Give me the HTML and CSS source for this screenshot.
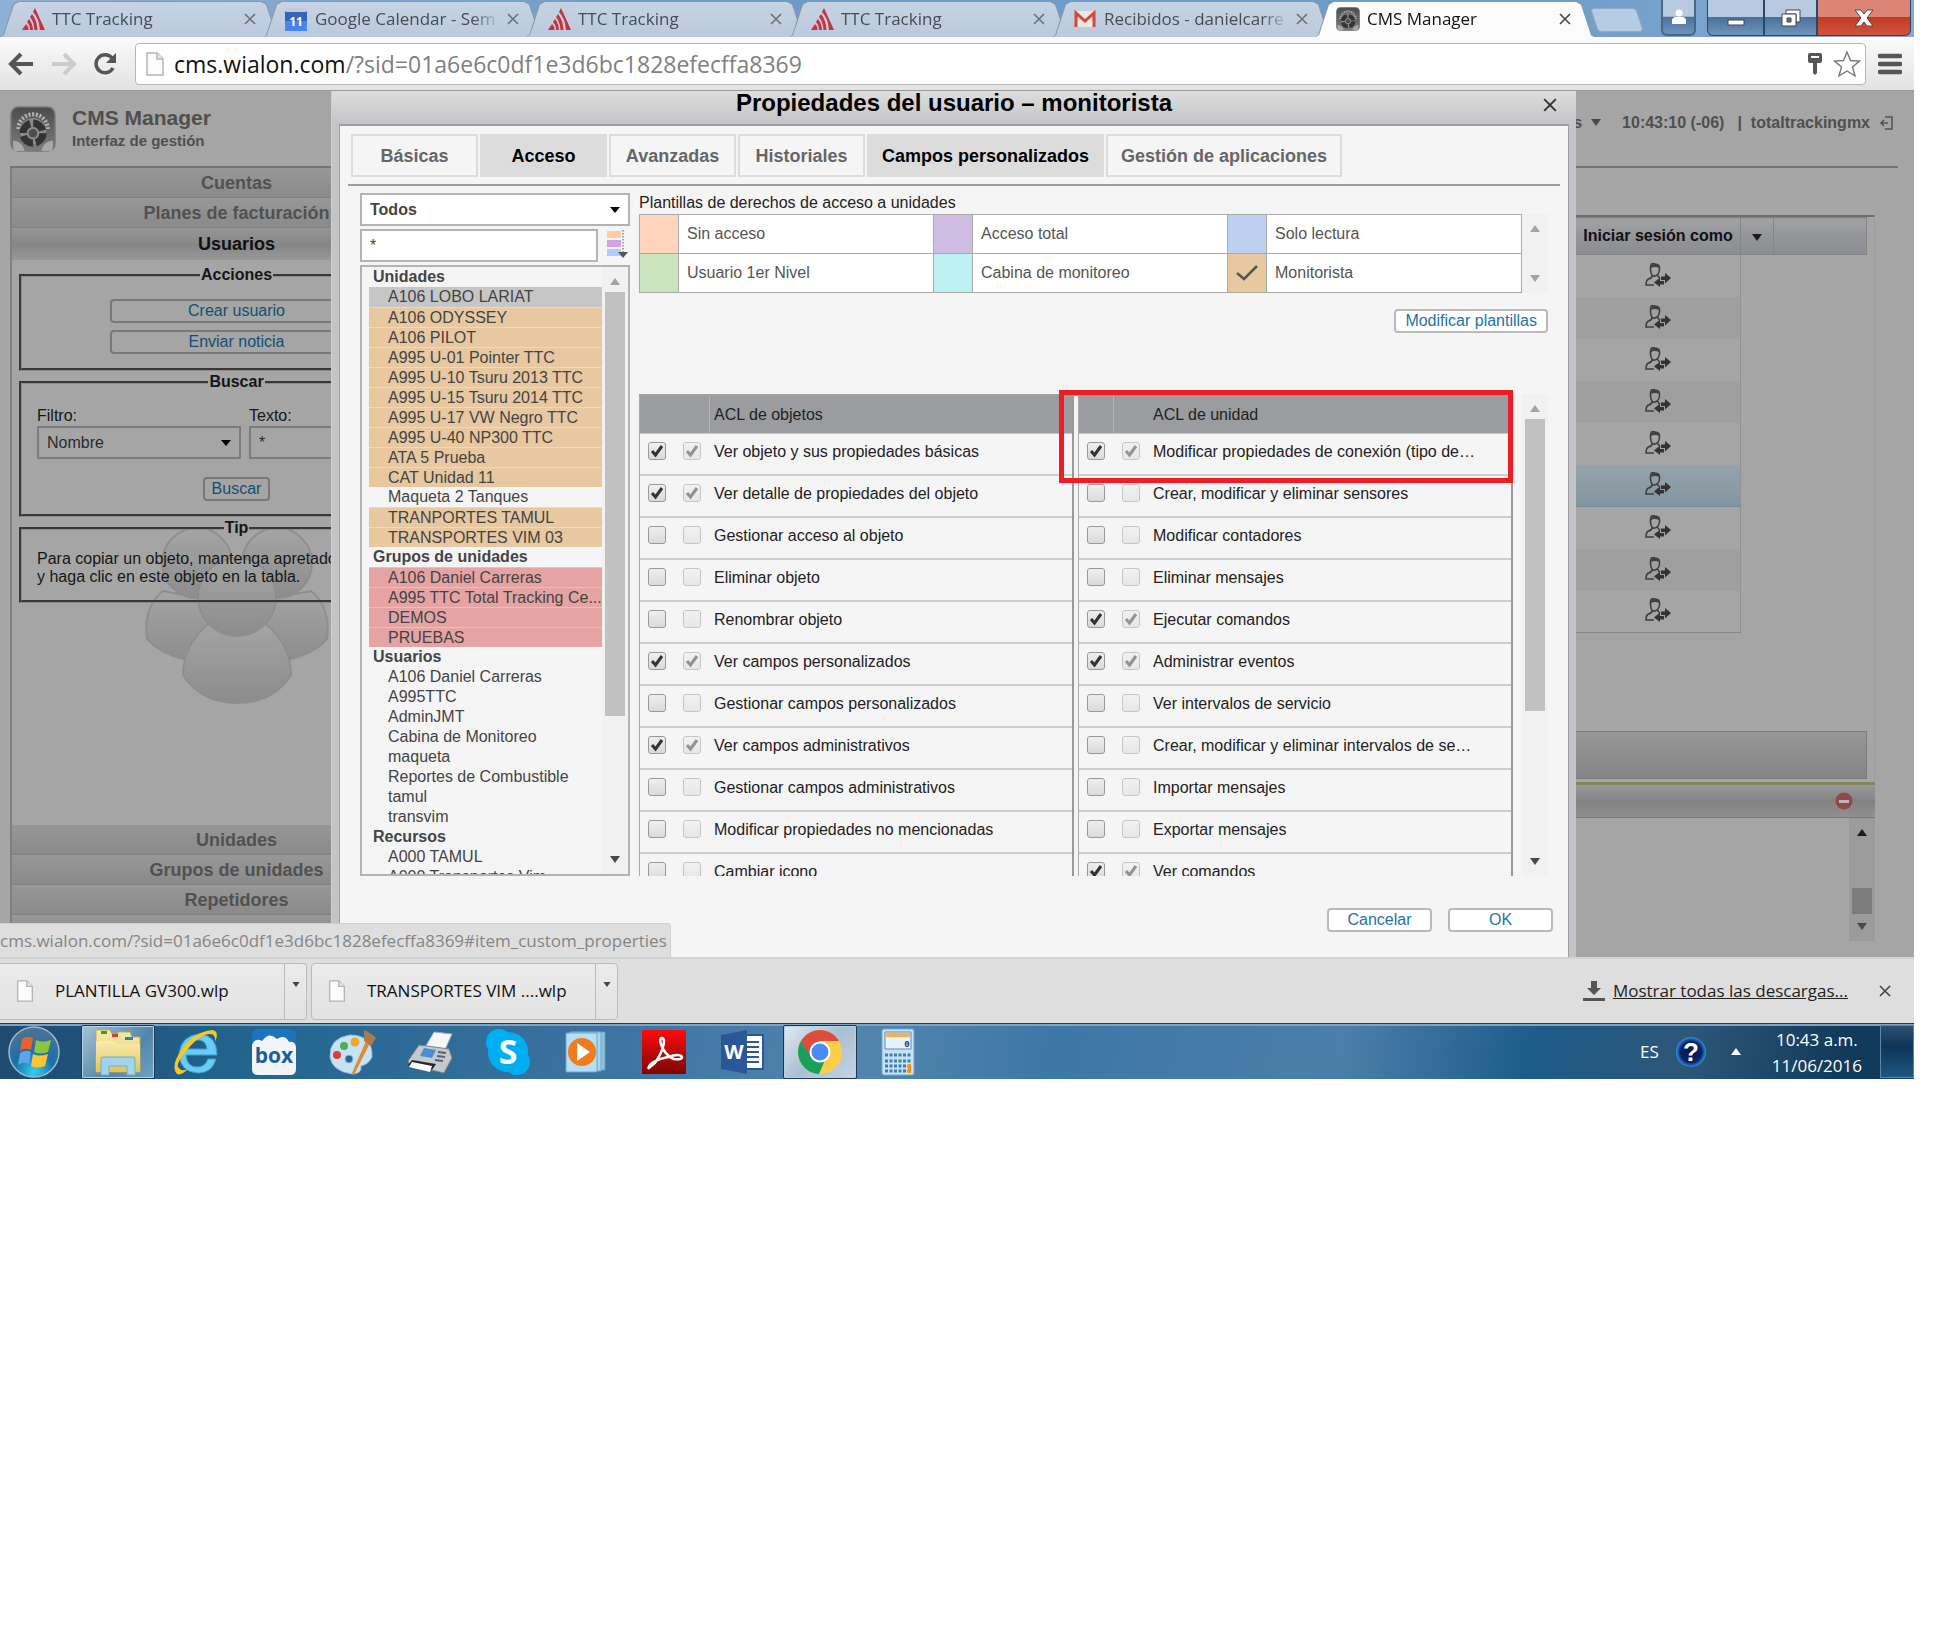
FILE: index.html
```html
<!DOCTYPE html>
<html lang="es">
<head>
<meta charset="utf-8">
<title>CMS Manager</title>
<link rel="stylesheet" href="styles.css">
</head>
<body>
<svg class="defs" aria-hidden="true">
  <defs>
    <linearGradient id="gFolder" x1="0" y1="0" x2="0" y2="1"><stop offset="0" stop-color="#f7ecb0"/><stop offset="1" stop-color="#e3c355"/></linearGradient>
    <linearGradient id="gRed" x1="0" y1="0" x2="0" y2="1"><stop offset="0" stop-color="#fb0d0d"/><stop offset="1" stop-color="#7e0505"/></linearGradient>
    <linearGradient id="gGear" x1="0" y1="0" x2="0" y2="1"><stop offset="0" stop-color="#4b4b4b"/><stop offset="1" stop-color="#7d7d7d"/></linearGradient>
    <linearGradient id="gPerson" x1="0" y1="0" x2="0" y2="1"><stop offset="0" stop-color="#a5a5a5"/><stop offset="1" stop-color="#828282"/></linearGradient>
    <radialGradient id="gOrb" cx=".5" cy=".9" r=".9"><stop offset="0" stop-color="#35d0f5"/><stop offset=".45" stop-color="#1b6fa8"/><stop offset="1" stop-color="#54728f"/></radialGradient>
    <radialGradient id="gHelp" cx=".5" cy=".5" r=".5"><stop offset="0" stop-color="#0a1450"/><stop offset=".7" stop-color="#0a2166"/><stop offset="1" stop-color="#2a93e8"/></radialGradient>
  </defs>
  <symbol id="ttc" viewBox="0 0 24 24"><path d="M14 1 24 23h-5Q18 11 12 5zM11 7q5 6 5.500 16h-3Q13 15 9 10zM8 12q3.500 4 4 11H9Q9 18 6 15zM5 17q2.500 2 2.500 6H1z" fill="#c7323e"/></symbol>
  <symbol id="close" viewBox="0 0 12 12"><path d="M1 1l10 10M11 1 1 11" fill="none" stroke="currentColor" stroke-width="1.600"/></symbol>
  <symbol id="gear" viewBox="0 0 44 44">
    <rect x="1" y="1" width="42" height="42" rx="7" fill="url(#gGear)" stroke="#777" stroke-width="1.500"/>
    <path d="M8 22a14 14 0 0 1 28 0" fill="none" stroke="#b0b0b0" stroke-width="4" stroke-dasharray="2 1.500"/>
    <circle cx="22" cy="24" r="12.500" fill="#8a8a8a"/>
    <circle cx="22" cy="26" r="9.500" fill="none" stroke="#333" stroke-width="7" stroke-dasharray="12 2.900"/>
    <circle cx="22" cy="26" r="4" fill="#4d4d4d"/>
    <path d="M3 33q9 1 11 10H6q-3 0-3-4zM41 33q-9 1-11 10h8q3 0 3-4z" fill="#a8a8a8"/>
  </symbol>
  <symbol id="file" viewBox="0 0 18 24"><path d="M1 1h10l6 6v16H1z" fill="#fbfbfb" stroke="#b5b5b5" stroke-width="1.500"/><path d="M11 1v6h6" fill="#e8e8e8" stroke="#b5b5b5" stroke-width="1.500"/></symbol>
  <symbol id="loginas" viewBox="0 0 26 24"><path d="M10 1q5 0 4.500 5.500T10 13 5.500 6.500 10 1zM7.500 12Q7 15 3.500 16 1 17 1 22h8M12.500 12q.5 2 2.500 3" fill="none" stroke="#3f3f3f" stroke-width="1.600"/><path d="M6 5q0-4 4-4t4 4q-4-2-8 0z" fill="#3f3f3f"/><path d="M26 15l-6-5v3.500h-4v3.500h4v3.500zM9 19.500l6-5V18h4v3.500h-4V24z" fill="#333"/></symbol>
  <symbol id="up" viewBox="0 0 10 7"><path d="M0 7 5 0l5 7z" fill="currentColor"/></symbol>
  <symbol id="down" viewBox="0 0 10 7"><path d="M0 0h10L5 7z" fill="currentColor"/></symbol>
</svg>

<div class="browser">
  <header class="tabstrip">
    <nav class="tabs" aria-label="Pestañas">
      <div class="tab"><svg class="favicon"><use href="#ttc"/></svg><span class="tab-title">TTC Tracking</span><button class="tab-close" aria-label="Cerrar"><svg><use href="#close"/></svg></button></div>
      <div class="tab"><svg class="favicon" viewBox="0 0 24 24"><path d="M1 4h22v20H1z" fill="#4a86ee"/><path d="M2 1h20v6H2z" fill="#c5cbd3"/><path d="M1 5h22v9H1z" fill="#3763c0"/><text x="12" y="19" class="fav-day">11</text></svg><span class="tab-title">Google Calendar - Sem</span><button class="tab-close" aria-label="Cerrar"><svg><use href="#close"/></svg></button></div>
      <div class="tab"><svg class="favicon"><use href="#ttc"/></svg><span class="tab-title">TTC Tracking</span><button class="tab-close" aria-label="Cerrar"><svg><use href="#close"/></svg></button></div>
      <div class="tab"><svg class="favicon"><use href="#ttc"/></svg><span class="tab-title">TTC Tracking</span><button class="tab-close" aria-label="Cerrar"><svg><use href="#close"/></svg></button></div>
      <div class="tab"><svg class="favicon" viewBox="0 0 24 24"><path d="M2 4h20v16H2z" fill="#eee4e4"/><path d="M3 20V6l9 8 9-8v14" fill="none" stroke="#d5473b" stroke-width="3"/></svg><span class="tab-title">Recibidos - danielcarre</span><button class="tab-close" aria-label="Cerrar"><svg><use href="#close"/></svg></button></div>
      <div class="tab tab-active"><svg class="favicon"><use href="#gear"/></svg><span class="tab-title">CMS Manager</span><button class="tab-close" aria-label="Cerrar"><svg><use href="#close"/></svg></button></div>
      <button class="tab-new" aria-label="Nueva pestaña"></button>
    </nav>
    <div class="window-buttons">
      <button class="win win-user" aria-label="Usuario"><svg width="16" height="16" viewBox="0 0 16 16"><circle cx="8" cy="4" r="3.500" fill="#fff"/><path d="M1 15V11q0-2 3-3h8q3 1 3 3v4z" fill="#fff"/></svg></button>
      <button class="win win-min" aria-label="Minimizar"><svg width="18" height="18" viewBox="0 0 18 18"><path d="M1 11h16v5H1z" fill="#fff" stroke="#445" /></svg></button>
      <button class="win win-max" aria-label="Restaurar"><svg width="20" height="18" viewBox="0 0 20 18"><path d="M5 1h14v12h-4V5H5z" fill="#fff" stroke="#445"/><path d="M1 5h14v12H1zM6 9v4h4V9z" fill="#fff" stroke="#445" fill-rule="evenodd"/></svg></button>
      <button class="win win-close" aria-label="Cerrar ventana"><svg width="20" height="18" viewBox="0 0 20 18"><path d="M1 1h6l3 4 3-4h6l-6 8 6 8h-6l-3-4-3 4H1l6-8z" fill="#fff" stroke="#544"/></svg></button>
    </div>
  </header>

  <div class="toolbar">
    <button class="tool" aria-label="Atrás"><svg width="26" height="24" viewBox="0 0 26 24"><path d="M13 2 3 12l10 10M3 12h22" fill="none" stroke="#555" stroke-width="4"/></svg></button>
    <button class="tool" aria-label="Adelante"><svg width="26" height="24" viewBox="0 0 26 24"><path d="M13 2l10 10-10 10M23 12H1" fill="none" stroke="#ccc" stroke-width="4"/></svg></button>
    <button class="tool" aria-label="Recargar"><svg width="24" height="24" viewBox="0 0 24 24"><path d="M19 16a9 9 0 1 1-1-10" fill="none" stroke="#555" stroke-width="3.500"/><path d="M22 1v10H12z" fill="#555"/></svg></button>
    <div class="omnibox">
      <svg width="18" height="24"><use href="#file"/></svg>
      <span class="url"><b>cms.wialon.com</b>/?sid=01a6e6c0df1e3d6bc1828efecffa8369</span>
      <svg width="16" height="22" viewBox="0 0 16 22"><path d="M1 2q0-2 2-2h10q2 0 2 2v6q0 2-2 2h-3v10l-2 2-2-2V10H3Q1 10 1 8z" fill="#555"/><path d="M4 3h8v2H4z" fill="#fff"/></svg>
      <svg width="28" height="28" viewBox="0 0 28 28"><path d="M14 2l3.500 8.500 9 .5-7 6 2.500 9-8-5-8 5 2.500-9-7-6 9-.5z" fill="#fff" stroke="#777" stroke-width="1.400"/></svg>
    </div>
    <button class="tool" aria-label="Menú"><svg width="24" height="22" viewBox="0 0 24 22"><path d="M2 3h20M2 11h20M2 19h20" stroke="#555" stroke-width="4.500" stroke-linecap="round"/></svg></button>
  </div>

  <main class="app">
    <div class="manager">
      <div class="mgr-head">
        <svg width="46" height="46"><use href="#gear"/></svg>
        <div class="brand"><div class="brand-name">CMS Manager</div><div class="brand-sub">Interfaz de gestión</div></div>
        <div class="session"><span>Herramientas</span><svg class="arrow"><use href="#down"/></svg><span class="clock">10:43:10 (-06)</span><span>|</span><span class="login">totaltrackingmx</span><svg width="14" height="14" viewBox="0 0 14 14"><path d="M6 1h7v12H6M9 7H2M5 4 2 7l3 3" fill="none" stroke="#555" stroke-width="1.600"/></svg></div>
      </div>
      <div class="mgr-body">
        <aside class="side">
          <button class="acc">Cuentas</button>
          <button class="acc">Planes de facturación</button>
          <button class="acc acc-open">Usuarios</button>
          <div class="side-body">
            <svg class="watermark" width="196" height="184" viewBox="0 0 196 184">
              <g fill="url(#gPerson)" stroke="#858585" stroke-width="2">
                <path d="M24 66Q4 82 8 114q18 20 60 24l20-60zM172 66q20 16 16 48-18 20-60 24l-20-60z"/>
                <circle cx="58" cy="38" r="35"/><circle cx="138" cy="38" r="35"/>
                <path d="M70 98Q44 120 44 150q18 28 54 28t54-28q0-30-26-52z"/>
                <circle cx="98" cy="72" r="39"/>
              </g>
            </svg>
            <fieldset class="box box-actions"><legend>Acciones</legend>
              <button class="btn">Crear usuario</button>
              <button class="btn">Enviar noticia</button>
            </fieldset>
            <fieldset class="box box-search"><legend>Buscar</legend>
              <div class="fields">
                <label for="filtro">Filtro:</label><label for="texto">Texto:</label>
                <select id="filtro"><option>Nombre</option></select>
                <input id="texto" type="text" value="*">
              </div>
              <button class="btn">Buscar</button>
            </fieldset>
            <fieldset class="box box-tip"><legend>Tip</legend>
              <p>Para copiar un objeto, mantenga apretado Ctrl<br>y haga clic en este objeto en la tabla.</p>
            </fieldset>
          </div>
          <button class="acc">Unidades</button>
          <button class="acc">Grupos de unidades</button>
          <button class="acc">Repetidores</button>
          <button class="acc">Pruebas de servicio</button>
        </aside>
        <section class="work">
          <div class="grid-wrap">
            <table class="users">
              <colgroup><col><col class="c-login"><col class="c-menu"><col class="c-rest"></colgroup>
              <thead><tr><th></th><th>Iniciar sesión como</th><th><svg class="arrow arrow-dark"><use href="#down"/></svg></th><th></th></tr></thead>
              <tbody>
                <tr><td></td><td><svg class="as"><use href="#loginas"/></svg></td></tr>
                <tr><td></td><td><svg class="as"><use href="#loginas"/></svg></td></tr>
                <tr><td></td><td><svg class="as"><use href="#loginas"/></svg></td></tr>
                <tr><td></td><td><svg class="as"><use href="#loginas"/></svg></td></tr>
                <tr><td></td><td><svg class="as"><use href="#loginas"/></svg></td></tr>
                <tr class="current"><td></td><td><svg class="as"><use href="#loginas"/></svg></td></tr>
                <tr><td></td><td><svg class="as"><use href="#loginas"/></svg></td></tr>
                <tr><td></td><td><svg class="as"><use href="#loginas"/></svg></td></tr>
                <tr><td></td><td><svg class="as"><use href="#loginas"/></svg></td></tr>
              </tbody>
            </table>
            <div class="grid-foot"></div>
          </div>
          <div class="log-head"><svg width="18" height="18" viewBox="0 0 18 18"><circle cx="9" cy="9" r="8.500" fill="#8e4a4a"/><path d="M4 8h10v3H4z" fill="#c0b4b4"/></svg></div>
          <div class="log"><div class="scroll scroll-dim"><svg class="arrow arrow-dark"><use href="#up"/></svg><i class="thumb"></i><svg class="arrow"><use href="#down"/></svg></div></div>
        </section>
      </div>
    </div>

    <section class="dialog" role="dialog" aria-labelledby="dlg-title">
      <header class="dlg-title"><h1 id="dlg-title">Propiedades del usuario – monitorista</h1><button class="dlg-close" aria-label="Cerrar"><svg width="14" height="14"><use href="#close"/></svg></button></header>
      <div class="dlg-panel">
        <nav class="dlg-tabs">
          <button>Básicas</button><button class="on">Acceso</button><button>Avanzadas</button><button>Historiales</button><button class="on wide">Campos personalizados</button><button class="wide">Gestión de aplicaciones</button>
        </nav>
        <div class="dlg-content">
          <div class="objects">
            <select class="bold" aria-label="Tipo"><option>Todos</option></select>
            <div class="mask"><input type="text" value="*" aria-label="Máscara">
              <button class="sort" aria-label="Ordenar"><svg width="22" height="30" viewBox="0 0 22 30"><path d="M1 1h14v7H1z" fill="#ffcba4"/><path d="M1 10h14v7H1z" fill="#cda4e6"/><path d="M1 19h14v7H1z" fill="#aecbfa"/><path d="M17 0v24" stroke="#555" stroke-dasharray="1.500 1.500"/><path d="M12 22h10l-5 6z" fill="#555"/></svg></button></div>
            <div class="list-box">
              <ul class="list">
                <li class="group">Unidades</li>
                <li class="sel">A106 LOBO LARIAT</li>
                <li class="mon">A106 ODYSSEY</li><li class="mon">A106 PILOT</li><li class="mon">A995 U-01 Pointer TTC</li><li class="mon">A995 U-10 Tsuru 2013 TTC</li><li class="mon">A995 U-15 Tsuru 2014 TTC</li><li class="mon">A995 U-17 VW Negro TTC</li><li class="mon">A995 U-40 NP300 TTC</li><li class="mon">ATA 5 Prueba</li><li class="mon">CAT Unidad 11</li>
                <li>Maqueta 2 Tanques</li>
                <li class="mon">TRANPORTES TAMUL</li><li class="mon">TRANSPORTES VIM 03</li>
                <li class="group">Grupos de unidades</li>
                <li class="red">A106 Daniel Carreras</li><li class="red">A995 TTC Total Tracking Ce...</li><li class="red">DEMOS</li><li class="red">PRUEBAS</li>
                <li class="group">Usuarios</li>
                <li>A106 Daniel Carreras</li><li>A995TTC</li><li>AdminJMT</li><li>Cabina de Monitoreo</li><li>maqueta</li><li>Reportes de Combustible</li><li>tamul</li><li>transvim</li>
                <li class="group">Recursos</li>
                <li>A000 TAMUL</li><li>A000 Transportes Vim</li>
              </ul>
              <div class="scroll"><svg class="arrow arrow-off"><use href="#up"/></svg><i class="thumb thumb-list"></i><svg class="arrow"><use href="#down"/></svg></div>
            </div>
          </div>
          <div class="rights">
            <p class="caption">Plantillas de derechos de acceso a unidades</p>
            <div class="tpl-row">
              <div class="templates">
                <label><input type="radio" name="tpl" class="t1">Sin acceso</label>
                <label><input type="radio" name="tpl" class="t2">Acceso total</label>
                <label><input type="radio" name="tpl" class="t3">Solo lectura</label>
                <label><input type="radio" name="tpl" class="t4">Usuario 1er Nivel</label>
                <label><input type="radio" name="tpl" class="t5">Cabina de monitoreo</label>
                <label><input type="radio" name="tpl" class="t6" checked>Monitorista</label>
              </div>
              <div class="scroll"><svg class="arrow arrow-off"><use href="#up"/></svg><svg class="arrow arrow-off"><use href="#down"/></svg></div>
            </div>
            <div class="tpl-actions"><button class="btn">Modificar plantillas</button></div>
            <div class="acl-row">
              <div class="acl">
                <div class="acl-view">
                  <table class="acl-table">
                    <thead><tr><th colspan="2" class="line"></th><th>ACL de objetos</th></tr></thead>
                    <tbody>
                      <tr><td><input type="checkbox" id="o1" checked></td><td><input type="checkbox" checked disabled aria-labelledby="lo1"></td><td><label id="lo1" for="o1">Ver objeto y sus propiedades básicas</label></td></tr>
                      <tr><td><input type="checkbox" id="o2" checked></td><td><input type="checkbox" checked disabled aria-labelledby="lo2"></td><td><label id="lo2" for="o2">Ver detalle de propiedades del objeto</label></td></tr>
                      <tr><td><input type="checkbox" id="o3"></td><td><input type="checkbox" disabled aria-labelledby="lo3"></td><td><label id="lo3" for="o3">Gestionar acceso al objeto</label></td></tr>
                      <tr><td><input type="checkbox" id="o4"></td><td><input type="checkbox" disabled aria-labelledby="lo4"></td><td><label id="lo4" for="o4">Eliminar objeto</label></td></tr>
                      <tr><td><input type="checkbox" id="o5"></td><td><input type="checkbox" disabled aria-labelledby="lo5"></td><td><label id="lo5" for="o5">Renombrar objeto</label></td></tr>
                      <tr><td><input type="checkbox" id="o6" checked></td><td><input type="checkbox" checked disabled aria-labelledby="lo6"></td><td><label id="lo6" for="o6">Ver campos personalizados</label></td></tr>
                      <tr><td><input type="checkbox" id="o7"></td><td><input type="checkbox" disabled aria-labelledby="lo7"></td><td><label id="lo7" for="o7">Gestionar campos personalizados</label></td></tr>
                      <tr><td><input type="checkbox" id="o8" checked></td><td><input type="checkbox" checked disabled aria-labelledby="lo8"></td><td><label id="lo8" for="o8">Ver campos administrativos</label></td></tr>
                      <tr><td><input type="checkbox" id="o9"></td><td><input type="checkbox" disabled aria-labelledby="lo9"></td><td><label id="lo9" for="o9">Gestionar campos administrativos</label></td></tr>
                      <tr><td><input type="checkbox" id="o10"></td><td><input type="checkbox" disabled aria-labelledby="lo10"></td><td><label id="lo10" for="o10">Modificar propiedades no mencionadas</label></td></tr>
                      <tr><td><input type="checkbox" id="o11"></td><td><input type="checkbox" disabled aria-labelledby="lo11"></td><td><label id="lo11" for="o11">Cambiar icono</label></td></tr>
                    </tbody>
                  </table>
                  <table class="acl-table">
                    <thead><tr><th class="line"></th><th></th><th>ACL de unidad</th></tr></thead>
                    <tbody>
                      <tr><td><input type="checkbox" id="u1" checked></td><td><input type="checkbox" checked disabled aria-labelledby="lu1"></td><td><label id="lu1" for="u1">Modificar propiedades de conexión (tipo de…</label></td></tr>
                      <tr><td><input type="checkbox" id="u2"></td><td><input type="checkbox" disabled aria-labelledby="lu2"></td><td><label id="lu2" for="u2">Crear, modificar y eliminar sensores</label></td></tr>
                      <tr><td><input type="checkbox" id="u3"></td><td><input type="checkbox" disabled aria-labelledby="lu3"></td><td><label id="lu3" for="u3">Modificar contadores</label></td></tr>
                      <tr><td><input type="checkbox" id="u4"></td><td><input type="checkbox" disabled aria-labelledby="lu4"></td><td><label id="lu4" for="u4">Eliminar mensajes</label></td></tr>
                      <tr><td><input type="checkbox" id="u5" checked></td><td><input type="checkbox" checked disabled aria-labelledby="lu5"></td><td><label id="lu5" for="u5">Ejecutar comandos</label></td></tr>
                      <tr><td><input type="checkbox" id="u6" checked></td><td><input type="checkbox" checked disabled aria-labelledby="lu6"></td><td><label id="lu6" for="u6">Administrar eventos</label></td></tr>
                      <tr><td><input type="checkbox" id="u7"></td><td><input type="checkbox" disabled aria-labelledby="lu7"></td><td><label id="lu7" for="u7">Ver intervalos de servicio</label></td></tr>
                      <tr><td><input type="checkbox" id="u8"></td><td><input type="checkbox" disabled aria-labelledby="lu8"></td><td><label id="lu8" for="u8">Crear, modificar y eliminar intervalos de se…</label></td></tr>
                      <tr><td><input type="checkbox" id="u9"></td><td><input type="checkbox" disabled aria-labelledby="lu9"></td><td><label id="lu9" for="u9">Importar mensajes</label></td></tr>
                      <tr><td><input type="checkbox" id="u10"></td><td><input type="checkbox" disabled aria-labelledby="lu10"></td><td><label id="lu10" for="u10">Exportar mensajes</label></td></tr>
                      <tr><td><input type="checkbox" id="u11" checked></td><td><input type="checkbox" checked disabled aria-labelledby="lu11"></td><td><label id="lu11" for="u11">Ver comandos</label></td></tr>
                    </tbody>
                  </table>
                </div>
                <div class="highlight"></div>
              </div>
              <div class="scroll"><svg class="arrow arrow-off"><use href="#up"/></svg><i class="thumb thumb-acl"></i><svg class="arrow"><use href="#down"/></svg></div>
            </div>
          </div>
        </div>
        <footer class="dlg-foot"><button class="btn">Cancelar</button><button class="btn">OK</button></footer>
      </div>
    </section>
    <div class="status">cms.wialon.com/?sid=01a6e6c0df1e3d6bc1828efecffa8369#item_custom_properties</div>
  </main>

  <div class="downloads">
    <div class="dl"><svg width="18" height="22"><use href="#file"/></svg><button class="dl-name">PLANTILLA GV300.wlp</button><button class="dl-menu" aria-label="Opciones"><svg><use href="#down"/></svg></button></div>
    <div class="dl"><svg width="18" height="22"><use href="#file"/></svg><button class="dl-name">TRANSPORTES VIM ....wlp</button><button class="dl-menu" aria-label="Opciones"><svg><use href="#down"/></svg></button></div>
    <div class="dl-all"><svg width="22" height="20" viewBox="0 0 22 20"><path d="M8 0h6v7h4l-7 7-7-7h4zM0 17h22v3H0z" fill="#555"/></svg><a href="#">Mostrar todas las descargas...</a></div>
    <button class="dl-close" aria-label="Cerrar"><svg width="12" height="12"><use href="#close"/></svg></button>
  </div>

  <footer class="taskbar">
    <button class="orb" aria-label="Inicio"><svg width="52" height="52" viewBox="0 0 52 52"><circle cx="26" cy="26" r="25" fill="url(#gOrb)" stroke="#9bb9d2" stroke-width="1.500"/><path d="M14 13q6-4 11-1l-2 12q-6-3-11 1z" fill="#e8632c"/><path d="M28 14q6 3 15 0l-3 12q-7 3-14 0z" fill="#8cc540"/><path d="M12 27q6-4 11-1l-2 12q-6-3-11 1z" fill="#5aa5e6"/><path d="M25 28q6 3 15 0l-3 12q-7 3-14 0z" fill="#fbc62f"/></svg></button>
    <button class="task on" aria-label="Explorador"><svg width="50" height="48" viewBox="0 0 50 48"><path d="M3 8V2h14l2 4h6V4h12l2 5h8v35H3z" fill="url(#gFolder)" stroke="#c9a94a"/><path d="M8 3h6v3H8z" fill="#3a9a3a"/><path d="M19 6h6v3h-6z" fill="#d63b2b"/><path d="M32 9h8v3h-8z" fill="#3a78c8"/><path d="M3 13h18l3 3h23v28H3z" fill="url(#gFolder)"/><path d="M8 47V31q0-2 2-2h30q2 0 2 2v16h-8v-9H16v9z" fill="#9fd3ee" stroke="#6eaed2"/></svg></button>
    <button class="task" aria-label="Internet Explorer"><svg width="48" height="48" viewBox="0 0 48 48"><path d="M36 31q-3 8-11 8-10 0-11-12h31Q45 7 27 6 9 8 7 26q1 18 19 19 14 0 18-14zM15 21q2-9 11-9 8 0 9 9z" fill="#6bcbf4" stroke="#3c9fd4" fill-rule="evenodd"/><path d="M5 46Q-2 38 10 21T40 2q8 1 3 12 1-8-5-8Q28 6 15 22T7 40q2 4 9 1-7 7-11 5z" fill="#f8c722"/></svg></button>
    <button class="task" aria-label="Box"><svg width="46" height="48" viewBox="0 0 46 48"><rect x="1" y="1" width="44" height="46" rx="6" fill="#1c75bb"/><path d="M1 17q3-8 10-4 7-10 15-2 8-5 12 3 6-1 7 5v22q0 6-6 6H7q-6 0-6-6z" fill="#f2f5f8"/><text x="23" y="35" class="box-word">box</text></svg></button>
    <button class="task" aria-label="Paint"><svg width="48" height="48" viewBox="0 0 48 48"><path d="M22 7Q1 10 2 29q2 14 22 17 10 0 9-8 8-2 11-9Q45 7 22 7zM21 27a4 4 0 1 1 0 8 4 4 0 0 1 0-8z" fill="#c5e3f5" stroke="#90b9d6" fill-rule="evenodd"/><circle cx="9" cy="27" r="4" fill="#e03c31"/><circle cx="16" cy="18" r="4" fill="#4cae4c"/><circle cx="27" cy="14" r="4.500" fill="#f4a62a"/><path d="M38 13l4 2-16 32-2-2z" fill="#e08a33"/><path d="M36 2q9 4 12 8l-5 8-7-5z" fill="#a97b4f"/></svg></button>
    <button class="task" aria-label="Fax"><svg width="48" height="48" viewBox="0 0 48 48"><path d="M28 4l18 2-8 18-20-3z" fill="#f4f6f8" stroke="#aab"/><path d="M13 17l30 4 3 9-8 15L4 37l-2-4z" fill="#c3c9cf" stroke="#7b8288"/><path d="M18 20l12 2-4 8-12-2z" fill="#4a8fd0"/><path d="M6 32l24 4-4 6L2 37z" fill="#23282d"/><path d="M6 34l20 4-2 6-21-5z" fill="#fff"/><path d="M32 24l8 1M31 28l8 1M29 32l8 1" stroke="#59616a" stroke-width="2"/></svg></button>
    <button class="task" aria-label="Skype"><svg width="46" height="48" viewBox="0 0 46 48"><circle cx="14" cy="14" r="13" fill="#00aff0"/><circle cx="32" cy="34" r="13" fill="#00aff0"/><circle cx="23" cy="24" r="20" fill="#00aff0"/><text x="23" y="36" class="skype-s">S</text></svg></button>
    <button class="task" aria-label="Reproductor"><svg width="42" height="42" viewBox="0 0 42 42"><path d="M8 1h32v38H8z" fill="#8dc3e0" stroke="#5f9bbd"/><path d="M5 1h31v39H5z" fill="#a9d6ec" stroke="#6ba6c6"/><path d="M1 2h31v39H1z" fill="#b5dff2" stroke="#6ba6c6"/><circle cx="17" cy="21" r="14" fill="#f07c1f"/><path d="M12 12l13 9-13 9z" fill="#fff"/></svg></button>
    <button class="task" aria-label="Adobe Reader"><svg width="46" height="46" viewBox="0 0 46 46"><path d="M1 1h44v44H1z" fill="url(#gRed)"/><path d="M9 38q7-4 12-17 4-11 0-12-4 1 1 11 5 8 11 10 8 1 8-2-2-4-14 0-14 3-18 8-3 5 0 2z" fill="none" stroke="#fff" stroke-width="2.500"/></svg></button>
    <button class="task" aria-label="Word"><svg width="46" height="46" viewBox="0 0 46 46"><path d="M24 6h20v34H24z" fill="#fff" stroke="#2b579a" stroke-width="2"/><path d="M26 13h14M26 18h14M26 23h14M26 28h14M26 33h14" stroke="#2b579a" stroke-width="2"/><path d="M2 6l26-5v44L2 40z" fill="#2b579a"/><text x="15" y="30" class="word-w">W</text></svg></button>
    <button class="task on chrome" aria-label="Chrome"><svg width="46" height="46" viewBox="0 0 46 46"><circle cx="23" cy="23" r="22" fill="#fccd48"/><path d="M4 12a22 22 0 0 1 38 0H23L13 29z" fill="#dc4b3e"/><path d="M4 12 14 28.500 28 31 22 45A22 22 0 0 1 4 12z" fill="#17a05e"/><circle cx="23" cy="23" r="10.500" fill="#fff"/><circle cx="23" cy="23" r="8.500" fill="#4c8bf5"/></svg></button>
    <button class="task" aria-label="Calculadora"><svg width="34" height="48" viewBox="0 0 34 48"><rect x="1" y="1" width="32" height="46" rx="2" fill="#c7e2f3" stroke="#7aa5c4"/><path d="M4 4h26v17H4z" fill="#e6f2fa" stroke="#5b8db3"/><path d="M5 5h24v4H5z" fill="#f6b34c"/><text x="26" y="19" class="calc-0">0</text><path d="M4 27h26M4 33h26M4 38h26M4 43h26" stroke="#3f7fae" stroke-width="3" stroke-dasharray="3 1.500"/><path d="M27 36h3v9h-3z" fill="#f0951e"/></svg></button>
    <div class="tray">
      <span>ES</span>
      <svg width="32" height="34" viewBox="0 0 32 34"><circle cx="16" cy="17" r="15" fill="url(#gHelp)"/><text x="16" y="26" class="help-q">?</text></svg>
      <svg class="tray-up"><use href="#up"/></svg>
      <div class="tray-clock"><div>10:43 a.m.</div><div>11/06/2016</div></div>
      <button class="show-desktop" aria-label="Mostrar escritorio"></button>
    </div>
  </footer>
</div>
</body>
</html>
```
FILE: styles.css
```css
* { box-sizing: border-box; }
body { margin: 0; background: #fff; color: #222; font: 16px/20px "Liberation Sans", Arial, sans-serif; }
button, input, select { font: inherit; color: inherit; margin: 0; padding: 0; }
button { border: 0; background: none; }
svg { flex: none; }
.defs { position: absolute; width: 0; height: 0; }
.browser { margin-right: 26px; min-width: 1500px; }
.arrow { width: 10px; height: 7px; color: #4a4a4a; }
.arrow-off { color: #a3a3a3; }
.arrow-dark { color: #1c1c1c; }

/* Tab strip */
.tabstrip { display: flex; justify-content: space-between; height: 37px; background: linear-gradient(90deg, #8fb0d2, #6d9bc8 40%, #6f9dc9 80%, #86abd0); font-family: "Open Sans", "Noto Sans", sans-serif; font-size: 17px; }
.tabs { display: flex; flex: 1; min-width: 0; padding: 1px 0 0; }
.tab { position: relative; z-index: 0; display: flex; flex: 0 1 280px; align-items: center; gap: 7px; min-width: 0; margin-right: -17px; padding: 0 24px 0 21px; color: #444d58; }
.tab::before, .tab::after { content: ""; position: absolute; inset: 0; z-index: -2; background: #8798ad; clip-path: polygon(0 100%, 3px 95%, 13px 8%, 18px 0, calc(100% - 18px) 0, calc(100% - 13px) 8%, calc(100% - 3px) 95%, 100% 100%); }
.tab::after { inset: 1px 1px 0; z-index: -1; background: linear-gradient(#c6d3e3, #bac9dc); }
.tab-active { z-index: 1; color: #111; }
.tab-active::after { background: #fbfbfb; }
.favicon { width: 24px; height: 24px; }
.tab-title { flex: 1; overflow: hidden; line-height: 28px; white-space: nowrap; -webkit-mask-image: linear-gradient(90deg, #000 85%, transparent); }
.tab-close { display: flex; color: #6a717a; }
.tab-close svg { width: 12px; height: 12px; }
.tab-active .tab-close { color: #444; }
.tab-new { width: 46px; height: 24px; margin: 7px 0 0 16px; border: 1px solid #8fa8c4; border-radius: 4px; background: #b6cbe1; transform: skewX(18deg); }
.window-buttons { display: flex; padding-right: 3px; }
.win { display: flex; align-items: center; justify-content: center; height: 36px; border: 1px solid #2b4767; border-top: 0; background: linear-gradient(#b7cadf 48%, #4d7299 50%, #6d94bb); }
.win-user { width: 35px; margin-right: 11px; border: 2px solid #4a6685; border-top: 0; border-radius: 0 0 6px 6px; }
.win-min { width: 57px; border-radius: 0 0 0 6px; }
.win-max { width: 53px; }
.win-close { width: 94px; border-radius: 0 0 6px 0; background: linear-gradient(#dc8577 48%, #c23a25 50%, #d0543c); }
.fav-day { font: 700 12px "Open Sans", sans-serif; fill: #fff; text-anchor: middle; }

/* Toolbar */
.toolbar { display: flex; align-items: center; gap: 17px; height: 54px; padding: 0 12px 0 8px; border-bottom: 1px solid #9a9a9a; background: linear-gradient(#fbfbfb, #e2e2e2); }
.tool { display: flex; }
.omnibox { display: flex; flex: 1; align-items: center; height: 42px; gap: 10px; margin-right: -6px; padding: 0 4px 0 10px; border: 1px solid #b6b6b6; border-radius: 4px; background: #fff; }
.omnibox + .tool { margin-left: 1px; }
.url { flex: 1; color: #808080; font: 23px/30px "Open Sans", "Noto Sans", sans-serif; }
.url b { color: #111; font-weight: 400; }

/* App area: the manager page with the dialog stacked on it */
.app { position: relative; display: grid; background: #a5a5a5; }
.app > .manager, .app > .dialog { grid-area: 1 / 1; }
.manager { contain: size; overflow: hidden; display: flex; flex-direction: column; padding: 0 16px 0 10px; }
.mgr-head { display: flex; align-items: center; gap: 16px; height: 77px; border-bottom: 2px solid #747474; color: #4f4f4f; font-weight: 700; }
.brand-name { font-size: 21px; line-height: 24px; }
.brand-sub { font-size: 15px; line-height: 22px; }
.session { display: flex; align-items: center; gap: 9px; margin: 0 5px 12px auto; }
.clock { margin: 0 4px 0 12px; }
.mgr-body { flex: 1; display: flex; min-height: 0; }
.side { display: flex; flex-direction: column; width: 451px; padding-bottom: 12px; border-left: 2px solid #808080; }
.acc { height: 30px; flex: none; border-bottom: 1px solid #828282; background: linear-gradient(#979797, #8a8a8a); color: #515151; font-size: 18px; font-weight: 700; }
.acc-open { height: 32px; border: 0; background: linear-gradient(#969696, #868686 55%, #999); color: #111; }
.side-body { position: relative; flex: 1; min-height: 0; padding: 5px 7px; color: #161616; }
.watermark { position: absolute; left: 127px; top: 265px; opacity: .7; }
.box { position: relative; margin: 0 0 1px; padding: 0; border: 3px groove #8c8c8c; text-align: center; }
.box legend { padding: 0 1px; font-weight: 700; line-height: 20px; }
.box-actions { display: flex; flex-direction: column; align-items: center; gap: 7px; padding: 14px 0; }
.box-actions .btn { width: 254px; }
.box-search { padding: 14px 15px 13px; }
.box-tip { padding: 12px 15px 14px; text-align: left; }
.box-tip legend { margin: 0 auto; }
.box-tip p { margin: 0; line-height: 18px; white-space: nowrap; }
.fields { display: grid; grid-template-columns: 204px 1fr; gap: 0 8px; margin-bottom: 18px; text-align: left; }
.btn { height: 24px; padding: 0 7px; border: 2px solid #b9b9b9; border-radius: 4px; background: #fff; color: #1f74a2; line-height: 20px; }
.side .btn { border-color: #787878; background: #a5a5a5; color: #124f73; }
select, input[type=text] { width: 100%; height: 33px; padding: 0 8px; border: 2px solid #b3b3b3; border-radius: 0; background-color: #fff; color: #444; }
select { appearance: none; background-image: url("data:image/svg+xml,%3Csvg xmlns='http://www.w3.org/2000/svg' width='10' height='6'%3E%3Cpath d='M0 0h10L5 6z'/%3E%3C/svg%3E"); background-repeat: no-repeat; background-position: right 8px center; }
.side select, .side input[type=text] { border-color: #7c7c7c; background-color: #a5a5a5; color: #2b2b2b; }
.bold { font-weight: 700; }

.work { flex: 1; display: flex; flex-direction: column; padding: 47px 23px 16px 20px; }
.grid-wrap { padding-right: 7px; border-top: 2px solid #6e6e70; border-right: 1px solid #9c9c9c; height: 567px; display: flex; flex-direction: column; justify-content: space-between; padding-bottom: 3px; }
.users { width: 100%; border-collapse: collapse; table-layout: fixed; }
.c-login { width: 165px; }
.c-menu { width: 33px; }
.c-rest { width: 93px; }
.users th { height: 37px; padding: 0; border: 1px solid #858588; background: linear-gradient(#a2a3a5, #949599 50%, #8c8d92); color: #111; }
.users td { height: 42px; padding: 0; border-right: 1px solid #919191; text-align: center; vertical-align: middle; }
.users tbody tr:nth-child(even) td { background: #9f9f9f; }
.users tbody tr.current:nth-child(n) td { background: linear-gradient(#94a3ab, #82959f); border-bottom: 1px solid #6e8d9c; }
.users tr:last-child td { border-bottom: 1px solid #858585; }
.as { width: 26px; height: 24px; display: block; margin: -2px auto 0; }
.grid-foot { height: 48px; border: 1px solid #7b7b7b; background: linear-gradient(#979797, #848484); }
.log-head { display: flex; align-items: center; justify-content: flex-end; height: 36px; padding: 0 22px 0 0; border-top: 3px solid #84845f; border-bottom: 1px solid #777; background: linear-gradient(#999, #838383 50%, #909090); }
.log { flex: 1; display: flex; justify-content: flex-end; }

/* Drawn scroll bars */
.scroll { display: flex; flex: none; flex-direction: column; align-items: center; width: 26px; padding: 11px 0; background: #f1f1f1; }
.scroll .arrow:last-child { margin-top: auto; }
.thumb { width: 20px; margin-top: 7px; background: #c1c1c1; }
.scroll-dim { background: #9b9b9b; }
.scroll-dim .thumb { height: 26px; margin-top: auto; background: #7c7c7c; }
.scroll-dim .arrow:last-child { margin-top: 9px; }
.thumb-list { height: 424px; }
.thumb-acl { height: 292px; }

/* Dialog */
.dialog { position: relative; margin: 0 338px 0 331px; padding: 0 7px; background: #c4c4c6; border-left: 1px solid #cfcfcf; }
.dlg-title { display: flex; justify-content: center; height: 33px; margin: 0 -7px; padding: 0 18px; background: linear-gradient(#dedede, #c4c4c6); position: relative; }
.dlg-title h1 { margin: 0; color: #000; font-size: 24px; line-height: 24px; }
.dlg-close { position: absolute; right: 19px; top: 7px; display: flex; color: #333; }
.dlg-panel { border: solid #9c9ca4; border-width: 2px 1px 0; background: #f5f5f5; padding-bottom: 25px; }
.dlg-tabs { display: flex; gap: 2px; margin: 0 8px; padding: 8px 3px 7px; border-bottom: 2px solid #9c9c9c; }
.dlg-tabs button { width: 127px; height: 43px; border: 2px solid #dcdcdc; color: #666; font-size: 18px; font-weight: 700; }
.dlg-tabs .on { background: #dcdcdc; color: #000; }
.dlg-tabs .wide { width: auto; padding: 0 13px; }
.dlg-content { display: flex; gap: 9px; padding: 7px 20px 0; }
.objects { width: 270px; display: flex; flex-direction: column; gap: 3px; }
.mask { display: flex; gap: 8px; }
.sort { display: flex; width: 24px; padding-top: 1px; }
.mask input[type=text] { width: 238px; }
.list-box { display: flex; height: 611px; border: 2px solid #b3b3b3; }
.list { flex: 1; min-width: 0; margin: 0; padding: 0 0 0 7px; overflow: hidden; list-style: none; color: #444; white-space: nowrap; }
.list li { height: 20px; padding-left: 19px; overflow: hidden; }
.list .group { padding-left: 4px; font-weight: 700; }
.list .sel { background: #c6c6c6; }
.list .mon { background: #e7c8a1; border-top: 1px solid #efd9bd; line-height: 19px; }
.list .red { background: #e6a3a3; border-top: 1px solid #efbcbc; line-height: 19px; }
.rights { flex: 1; min-width: 0; }
.caption { margin: 0 0 1px; }
.tpl-row, .acl-row { display: flex; }
.templates { flex: 1; display: grid; grid-template-columns: repeat(3, 1fr); border-top: 1px solid #aaa; border-right: 1px solid #aaa; background: #fff; }
.templates label { display: flex; align-items: center; gap: 8px; height: 39px; border-bottom: 1px solid #aaa; color: #555; line-height: 22px; }
.templates input { appearance: none; width: 40px; height: 100%; border: solid #aaa; border-width: 0 1px; }
.t1 { background: #ffd6bd; } .t2 { background: #cfbce3; } .t3 { background: #bcd0f2; }
.t4 { background: #c9e4bf; } .t5 { background: #bdf1f1; }
.t6 { background: #e7c8a1 url("data:image/svg+xml,%3Csvg xmlns='http://www.w3.org/2000/svg' width='22' height='16'%3E%3Cpath d='M1 8l7 6L21 1' fill='none' stroke='%23555' stroke-width='2.5'/%3E%3C/svg%3E") center no-repeat; }
.tpl-actions { display: flex; justify-content: flex-end; padding: 16px 0 61px; }
.tpl-actions .btn { padding: 0 9px; }
.acl { position: relative; flex: 1; margin-right: 9px; }
.acl-view { display: flex; gap: 4px; height: 482px; overflow: hidden; border-top: 2px solid #a0a0a0; }
.acl-table { flex: 1 1 0; width: 0; border-collapse: separate; border-spacing: 0; table-layout: fixed; border-left: 1px solid #aaa; border-right: 2px solid #999; text-align: left; }
.acl-table th { width: 35px; height: 38px; padding: 0 0 0 4px; background: #9b9ca0; border-bottom: 1px solid #c8c8c8; font-weight: 400; }
.acl-table th[colspan] { width: 70px; }
.acl-table th:last-child { width: auto; }
.acl-table .line { border-right: 1px solid #b4b4b6; }
.acl-table td { height: 42px; padding: 8px 0 0 4px; border-bottom: 2px solid #cfcfcf; line-height: 20px; vertical-align: top; white-space: nowrap; }
.acl-table td:not(:last-child) { padding-left: 8px; }
.acl-table input { display: block; appearance: none; width: 18px; height: 18px; border: 1px solid #999; border-radius: 3px; background: linear-gradient(#efefef, #dadada); }
.acl-table input:checked { background: url("data:image/svg+xml,%3Csvg xmlns='http://www.w3.org/2000/svg' width='14' height='14'%3E%3Cpath d='M2 7l3.500 4L12 2' fill='none' stroke='%23333' stroke-width='3'/%3E%3C/svg%3E") center no-repeat, linear-gradient(#efefef, #dadada); }
.acl-table input:disabled { opacity: .5; }
.highlight { position: absolute; left: calc(50% - 17px); right: 0; top: -4px; height: 93px; border: 5px solid #ee1c24; pointer-events: none; }
.dlg-foot { display: flex; justify-content: flex-end; gap: 16px; padding: 32px 15px 0; }
.dlg-foot .btn { width: 105px; }
.status { position: absolute; left: 0; bottom: 0; height: 34px; padding-right: 3px; border: 1px solid #d0d0d0; border-width: 1px 1px 0 0; border-radius: 0 4px 0 0; background: #dedede; color: #858585; font: 17px/33px "Open Sans", "Noto Sans", sans-serif; }

/* Downloads */
.downloads { display: flex; align-items: center; gap: 4px; height: 66px; border-top: 2px solid #d2d2d2; background: #dedede; color: #111; font: 17px/24px "Open Sans", "Noto Sans", sans-serif; }
.dl { display: flex; align-items: center; width: 307px; height: 57px; padding-left: 16px; border: 1px solid #bbb; border-radius: 4px; background: linear-gradient(#ebebeb, #e2e2e2); }
.dl:first-child { border-left: 0; border-radius: 0 4px 4px 0; }
.dl-name { flex: 1; padding-left: 21px; text-align: left; white-space: nowrap; }
.dl-menu { align-self: stretch; display: flex; width: 22px; justify-content: center; padding-top: 18px; border-left: 1px solid #bbb; }
.dl-menu svg { width: 8px; height: 5px; color: #444; }
.dl-all { display: flex; align-items: center; gap: 8px; margin-left: auto; }
.dl-all a { color: #222; }
.dl-close { display: flex; margin: 0 23px 0 27px; color: #444; }

/* Taskbar */
.taskbar { display: flex; align-items: center; gap: 4px; height: 56px; padding-left: 8px; border-top: 1px solid #1d3b57; background: linear-gradient(100deg, #1e4a70, #23668f 14%, #3a719f 30%, #5285ae 45%, #3c78a4 55%, #4b7fa9 70%, #1c5c88 80%, #2e5678 88%, #123a5a 96%); box-shadow: inset 0 2px 0 #7ba5c6; }
.orb { display: flex; margin-right: 17px; }
.task { display: flex; align-items: center; justify-content: center; width: 74px; height: 54px; border: 1px solid transparent; border-radius: 2px; }
.task.on { border-color: #1c3850; background: linear-gradient(135deg, #a9c3d4, #4f86ab 60%, #6fa3c3); box-shadow: inset 0 0 0 1px #b8d0e0; }
.task.chrome { background: linear-gradient(135deg, #e2eaf0, #a9bfd2 50%, #c4d4e2); }
.tray { display: flex; align-items: center; margin-left: auto; color: #fff; font: 17px/26px "Open Sans", "Noto Sans", sans-serif; gap: 16px; }
.tray-up { width: 12px; height: 7px; margin: 0 14px 0 7px; }
.tray-clock { margin-right: 2px; padding-top: 2px; text-align: center; }
.show-desktop { width: 34px; height: 53px; border: 1px solid #5d87a8; background: linear-gradient(#2c506f, #0d3558 40%, #1f5582); }
.box-word { font: 700 21px "Open Sans", sans-serif; fill: #1c5f9e; text-anchor: middle; }
.skype-s { font: 700 34px "Open Sans", sans-serif; fill: #fff; text-anchor: middle; }
.word-w { font: 700 20px "Open Sans", sans-serif; fill: #fff; text-anchor: middle; }
.calc-0 { font: 700 9px "Liberation Mono", monospace; fill: #235; text-anchor: middle; }
.help-q { font: 700 26px "Liberation Sans", sans-serif; fill: #fff; text-anchor: middle; }
```
